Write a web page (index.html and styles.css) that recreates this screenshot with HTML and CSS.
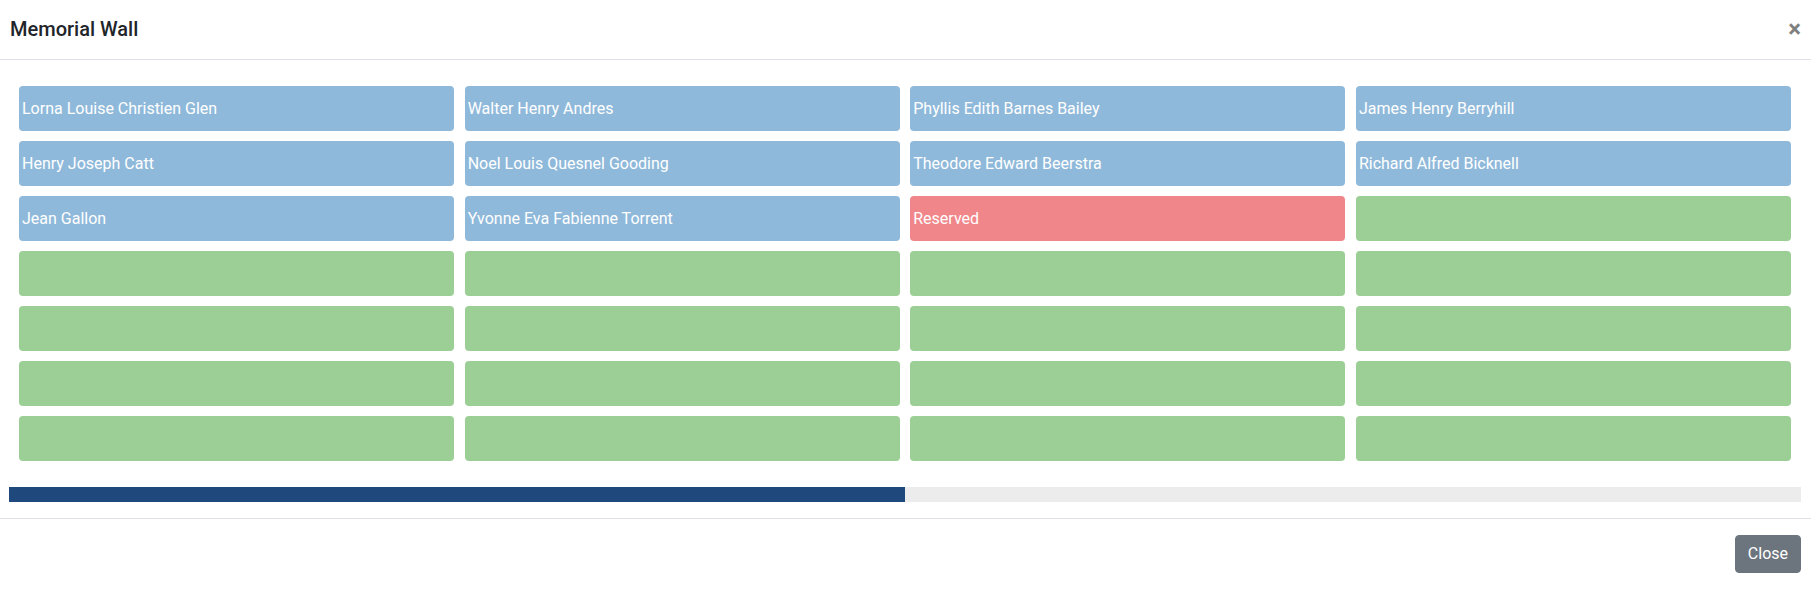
FILE: index.html
```html
<!DOCTYPE html>
<html>
<head>
<meta charset="utf-8">
<title>Memorial Wall</title>
<link rel="stylesheet" href="styles.css">
</head>
<body>
<div class="modal">
  <div class="modal-header">
    <h5 class="modal-title">Memorial Wall</h5>
    <button class="close" type="button">×</button>
  </div>
  <div class="modal-body">
    <div class="wall">
      <div class="slot taken">Lorna Louise Christien Glen</div>
      <div class="slot taken">Walter Henry Andres</div>
      <div class="slot taken">Phyllis Edith Barnes Bailey</div>
      <div class="slot taken">James Henry Berryhill</div>
      <div class="slot taken">Henry Joseph Catt</div>
      <div class="slot taken">Noel Louis Quesnel Gooding</div>
      <div class="slot taken">Theodore Edward Beerstra</div>
      <div class="slot taken">Richard Alfred Bicknell</div>
      <div class="slot taken">Jean Gallon</div>
      <div class="slot taken">Yvonne Eva Fabienne Torrent</div>
      <div class="slot reserved">Reserved</div>
      <div class="slot free"></div>
      <div class="slot free"></div>
      <div class="slot free"></div>
      <div class="slot free"></div>
      <div class="slot free"></div>
      <div class="slot free"></div>
      <div class="slot free"></div>
      <div class="slot free"></div>
      <div class="slot free"></div>
      <div class="slot free"></div>
      <div class="slot free"></div>
      <div class="slot free"></div>
      <div class="slot free"></div>
      <div class="slot free"></div>
      <div class="slot free"></div>
      <div class="slot free"></div>
      <div class="slot free"></div>
    </div>
    <div class="progress"><div class="progress-bar" style="width: 50%"></div></div>
  </div>
  <div class="modal-footer">
    <button class="btn" type="button">Close</button>
  </div>
</div>
</body>
</html>
```
FILE: styles.css
```css
* { box-sizing: border-box; }
html, body { margin: 0; padding: 0; background: #fff; }
body { font-family: Roboto, "Liberation Sans", Arial, sans-serif; color: #212529; }
.modal { width: 1811px; height: 589px; display: flex; flex-direction: column; }
.modal-header {
  height: 60px;
  display: flex;
  align-items: center;
  justify-content: space-between;
  padding: 0 10px 1px 10px;
  border-bottom: 1px solid #dee2e6;
}
.modal-title { margin: 0; font-size: 20px; font-weight: 500; line-height: 30px; color: #212529; }
.close {
  border: 0; background: transparent; padding: 0; margin: 0;
  font-family: Roboto, "Liberation Sans", Arial, sans-serif;
  font-size: 24px; font-weight: 700; line-height: 1; color: #000; opacity: .5;
  cursor: pointer;
}
.modal-body { padding: 26px 10px 16px 9px; }
.wall {
  display: grid;
  grid-template-columns: repeat(4, 1fr);
  column-gap: 10.5px;
  row-gap: 10px;
  padding: 0 10px;
}
.slot {
  height: 45px;
  border-radius: 4px;
  color: #fff;
  font-size: 16px;
  display: flex;
  align-items: center;
  padding-left: 3px;
  white-space: nowrap;
  overflow: hidden;
}
.taken { background: #8fb9da; }
.reserved { background: #f1868a; }
.free { background: #9bcf95; }
.progress { margin-top: 26px; height: 15px; background: #ececec; display: flex; }
.progress-bar { background: #1f497d; height: 100%; }
.modal-footer {
  flex: 1;
  border-top: 1px solid #dee2e6;
  display: flex;
  justify-content: flex-end;
  align-items: flex-start;
  padding: 16px 10px;
}
.btn {
  font-family: Roboto, "Liberation Sans", Arial, sans-serif;
  background: #6c757d; color: #fff; border: 1px solid #6c757d;
  border-radius: 4px; font-size: 16px; line-height: 24px;
  padding: 6px 12px; height: 38px;
}
```
